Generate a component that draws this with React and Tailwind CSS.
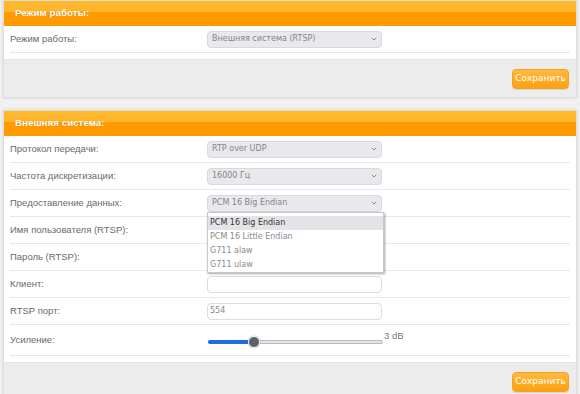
import React from "react";

const Chevron = () => (
  <svg width="6" height="4" viewBox="0 0 6 4" className="shrink-0">
    <path d="M0.8 0.8 L3 3 L5.2 0.8" fill="none" stroke="#8a8a8a" strokeWidth="1" />
  </svg>
);

const Select = ({ value }) => (
  <div className="w-[175px] h-[17px] rounded-[4px] border border-[#d8d8de] bg-[#e9e9ed] flex items-center justify-between pl-[4px] pr-[4px] text-[8px] text-[#858585] font-['DejaVu_Sans',sans-serif]">
    <span>{value}</span>
    <Chevron />
  </div>
);

const Input = ({ value }) => (
  <div className="w-[175px] h-[17px] rounded-[4px] border border-[#dcdcdc] bg-white flex items-center pl-[2px] text-[8px] text-[#858585] font-['DejaVu_Sans',sans-serif]">
    {value}
  </div>
);

const Row = ({ label, children, tall }) => (
  <div className={`flex items-center border-b border-[#e8e8e8] ${tall ? "h-[31px]" : "h-[27px]"}`}>
    <div className="w-[197px] text-[9.5px] text-[#6a6a6a] font-['Liberation_Sans',Arial,sans-serif]">{label}</div>
    {children}
  </div>
);

const Header = ({ title }) => (
  <div className="h-[25px] bg-[linear-gradient(to_bottom,#ffba2c_0%,#ffb42a_45%,#ff9a00_46%,#ff9a00_100%)] flex items-center pl-[11px]">
    <span className="text-white font-bold text-[9.8px] font-['Liberation_Sans',Arial,sans-serif] [text-shadow:0_0_1px_rgba(150,80,0,0.5)]">{title}</span>
  </div>
);

const Button = () => (
  <div className="w-[57px] h-[20px] rounded-[4px] bg-[linear-gradient(to_bottom,#ffba3c,#ffa012)] border border-[#f7a21c] flex items-center justify-center text-white text-[9px] font-['DejaVu_Sans',sans-serif] shadow-[0_1px_1px_rgba(0,0,0,0.1)]">
    Сохранить
  </div>
);

const Panel = ({ title, children, className = "" }) => (
  <div className={`mx-[3px] border border-[#dddddd] shadow-[0_0_3px_rgba(0,0,0,0.12)] bg-white ${className}`}>
    <Header title={title} />
    <div className="px-[6px] pb-[6px] bg-white">{children}</div>
    <div className="bg-[#ececec] flex justify-end items-center pr-[7px] h-[38px] border-t border-[#e4e4e4]">
      <Button />
    </div>
  </div>
);

export default function App() {
  return (
    <div className="w-[580px] h-[394px] overflow-hidden bg-[#f1f1f1] pt-0">
      <Panel title="Режим работы:">
        <Row label="Режим работы:">
          <Select value="Внешняя система (RTSP)" />
        </Row>
      </Panel>
      <Panel title="Внешняя система:" className="mt-[12px]">
        <Row label="Протокол передачи:">
          <Select value="RTP over UDP" />
        </Row>
        <Row label="Частота дискретизации:">
          <Select value="16000 Гц" />
        </Row>
        <Row label="Предоставление данных:">
          <div className="relative">
            <Select value="PCM 16 Big Endian" />
            <div className="absolute left-0 top-[17px] w-[177px] h-[61px] bg-white border border-[#c8c8c8] shadow-[1px_1px_2px_rgba(0,0,0,0.35)] z-10 pt-[3px] text-[8px] font-['DejaVu_Sans',sans-serif]">
              <div className="h-[14px] bg-[#e4e4e8] text-[#333] flex items-center pl-[2px]">PCM 16 Big Endian</div>
              <div className="h-[14px] text-[#8a8a8a] flex items-center pl-[2px]">PCM 16 Little Endian</div>
              <div className="h-[14px] text-[#8a8a8a] flex items-center pl-[2px]">G711 alaw</div>
              <div className="h-[14px] text-[#8a8a8a] flex items-center pl-[2px]">G711 ulaw</div>
            </div>
          </div>
        </Row>
        <Row label="Имя пользователя (RTSP):">
          <Input value="" />
        </Row>
        <Row label="Пароль (RTSP):">
          <Input value="" />
        </Row>
        <Row label="Клиент:">
          <Input value="" />
        </Row>
        <Row label="RTSP порт:">
          <Input value="554" />
        </Row>
        <Row label="Усиление:" tall>
          <div className="flex items-start">
            <div className="relative w-[176px] h-[12px] mt-[3px]">
              <div className="absolute left-[1px] right-0 top-[4px] h-[4px] rounded-full bg-[#e4e4e8] border border-[#b8b8c0]" />
              <div className="absolute left-[1px] w-[47px] top-[4px] h-[4px] rounded-full bg-[#1e6ee0]" />
              <div className="absolute left-[41px] top-0 w-[12px] h-[12px] rounded-full bg-[#5c606b] border border-[#ffffff] shadow-[0_0_1px_rgba(0,0,0,0.5)]" />
            </div>
            <span className="-mt-[4px] ml-[1px] text-[9.5px] text-[#777] font-['Liberation_Sans',Arial,sans-serif]">3 dB</span>
          </div>
        </Row>
      </Panel>
    </div>
  );
}
